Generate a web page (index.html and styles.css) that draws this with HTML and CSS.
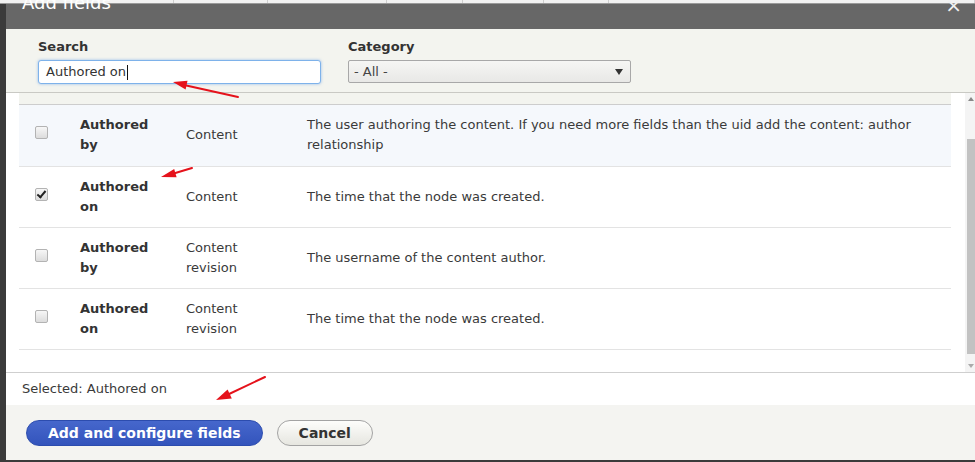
FILE: index.html
```html
<!DOCTYPE html>
<html lang="en">
<head>
  <meta charset="UTF-8" />
  <meta name="viewport" content="width=device-width, initial-scale=1.0" />
  <title>Add fields</title>
  <link rel="stylesheet" href="styles.css">
</head>
<body>

  <!-- the page behind the modal, only its header edge shows -->
  <div class="page-strip">
    <span></span><span></span><span></span><span></span>
    <span></span><span></span><span></span><span></span>
  </div>

  <div class="dialog">
    <div class="dialog-title">
      <span class="dialog-title-text">Add fields</span>
      <span class="dialog-close">&times;</span>
    </div>

    <div class="filters">
      <div class="filter filter-search">
        <label>Search</label>
        <div class="text-input">Authored on<span class="caret"></span></div>
      </div>
      <div class="filter filter-category">
        <label>Category</label>
        <div class="select">- All -<span class="select-arrow"></span></div>
      </div>
    </div>

    <div class="list-area">
      <div class="list-scroll">
        <div class="list-head"></div>
        <table class="fields">
          <colgroup>
            <col class="col-check">
            <col class="col-name">
            <col class="col-category">
            <col>
          </colgroup>
          <tbody>
            <tr class="is-hover">
              <td><input type="checkbox" class="check"></td>
              <td class="name">Authored by</td>
              <td>Content</td>
              <td>The user authoring the content. If you need more fields than the uid add the content: author relationship</td>
            </tr>
            <tr>
              <td><input type="checkbox" class="check" checked></td>
              <td class="name">Authored on</td>
              <td>Content</td>
              <td>The time that the node was created.</td>
            </tr>
            <tr>
              <td><input type="checkbox" class="check"></td>
              <td class="name">Authored by</td>
              <td>Content revision</td>
              <td>The username of the content author.</td>
            </tr>
            <tr>
              <td><input type="checkbox" class="check"></td>
              <td class="name">Authored on</td>
              <td>Content revision</td>
              <td>The time that the node was created.</td>
            </tr>
          </tbody>
        </table>
      </div>
      <div class="scrollbar">
        <span class="scroll-up"></span>
        <span class="scroll-thumb"></span>
        <span class="scroll-down"></span>
      </div>
    </div>

    <div class="selected">Selected: Authored on</div>

    <div class="button-pane">
      <button class="button button-primary">Add and configure fields</button>
      <button class="button">Cancel</button>
    </div>
  </div>

  <!-- red pointer arrows drawn on top -->
  <svg class="marks" width="975" height="462" viewBox="0 0 975 462">
    <g stroke="#e5121b" stroke-width="2" fill="#e5121b" stroke-linecap="round">
      <line x1="238" y1="97" x2="184" y2="85" />
      <polygon stroke="none" points="173,82 187.5,80.8 185.6,89.4" />
      <line x1="192" y1="168" x2="172" y2="174" />
      <polygon stroke="none" points="161,177 176.6,177.2 174.2,169" />
      <line x1="265" y1="377" x2="227" y2="395" />
      <polygon stroke="none" points="216,400 231.8,398.4 227.6,389.6" />
    </g>
  </svg>

</body>
</html>
```

FILE: styles.css
```css
* {
  box-sizing: border-box;
}

body {
  margin: 0;
  height: 462px;
  overflow: hidden;
  position: relative;
  background: #3b3b3b;
  font-family: "DejaVu Sans", "Noto Sans", sans-serif;
  font-size: 13px;
  color: #333;
}

/* page header behind the overlay */
.page-strip {
  display: grid;
  grid-template-columns: 49px 125px 94px 119px 76px 81px 65px 1fr;
  height: 4px;
  background: #f2f2f2;
  border-bottom: 1px solid #9a9a9a;
}

.page-strip span {
  border-right: 1px solid #cfcfcf;
}

.dialog {
  width: 974px;
  height: 456px;
  margin-left: 6px;
  background: #fff;
  display: flex;
  flex-direction: column;
}

.dialog > * {
  flex-shrink: 0;
}

.dialog-title {
  height: 25px;
  background: #676767;
  color: #fff;
  display: flex;
  justify-content: space-between;
  align-items: flex-start;
  padding: 0 18px 0 16px;
}

.dialog-title-text {
  font-size: 18px;
  line-height: 18px;
  margin-top: -10px;
}

.dialog-close {
  font-size: 20px;
  line-height: 20px;
  margin-top: -9px;
  color: #f0f0f0;
}

/* search / category filters */
.filters {
  display: flex;
  gap: 27px;
  padding: 9px 32px 8px;
  background: #f3f4ef;
  border-bottom: 1px solid #c9c9c4;
}

.filter label {
  display: block;
  font-weight: bold;
  line-height: 18px;
  margin-bottom: 4px;
}

.text-input {
  width: 283px;
  height: 24px;
  padding: 0 7px;
  line-height: 22px;
  background: #fff;
  border: 1px solid #7eb2ea;
  border-radius: 3px;
  box-shadow: 0 0 3px rgba(70, 140, 230, 0.55);
  display: flex;
  align-items: center;
}

.caret {
  width: 1px;
  height: 15px;
  margin-left: 1px;
  background: #111;
}

.select {
  width: 283px;
  height: 23px;
  padding: 0 7px 0 5px;
  line-height: 21px;
  background: linear-gradient(#f6f6f4, #e8e8e6);
  border: 1px solid #a8a8a8;
  border-radius: 2px;
  display: flex;
  justify-content: space-between;
  align-items: center;
  color: #444;
}

.select-arrow {
  border-left: 4px solid transparent;
  border-right: 4px solid transparent;
  border-top: 6px solid #333;
}

/* field list */
.list-area {
  height: 280px;
  display: flex;
  border-bottom: 1px solid #cfcfcf;
}

.list-scroll {
  flex: 1;
  padding: 0 14px 0 13px;
}

.list-head {
  height: 12px;
  background: #f3f4ef;
  border-bottom: 1px solid #cdcdcd;
}

.fields {
  width: 100%;
  border-collapse: collapse;
  table-layout: fixed;
}

.col-check {
  width: 49px;
}

.col-name {
  width: 106px;
}

.col-category {
  width: 121px;
}

.fields td {
  padding: 10px 12px;
  line-height: 20px;
  height: 61px;
  vertical-align: middle;
  border-bottom: 1px solid #e3e3e3;
  color: #3a3a3a;
}

.fields td:first-child {
  padding-left: 16px;
}

.fields td.name {
  font-weight: bold;
  color: #333;
}

.fields tr.is-hover td {
  background: #f5f8fc;
}

.check {
  appearance: none;
  display: block;
  position: relative;
  width: 13px;
  height: 13px;
  margin: -5px 0 0;
  border: 1px solid #b3b3b3;
  border-radius: 2px;
  background: linear-gradient(#f7f7f7, #dcdcdc);
}

.check:checked::after {
  content: "";
  position: absolute;
  left: 3px;
  top: 0;
  width: 3px;
  height: 7px;
  border-right: 2px solid #222;
  border-bottom: 2px solid #222;
  transform: rotate(40deg);
}

.scrollbar {
  width: 15px;
  background: #f4f4f4;
  display: flex;
  flex-direction: column;
  align-items: flex-start;
  padding: 4px 0 4px 2px;
}

.scroll-up,
.scroll-down {
  width: 0;
  margin-left: 1px;
  border-left: 3px solid transparent;
  border-right: 3px solid transparent;
}

.scroll-up {
  border-bottom: 4px solid #888;
}

.scroll-down {
  border-top: 4px solid #aaa;
}

.scroll-thumb {
  flex: 1;
  width: 11px;
  margin: 38px 0 10px;
  background: #c2c2c2;
}

.selected {
  padding: 7px 16px;
  line-height: 18px;
  height: 32px;
  color: #3a3a3a;
}

/* dialog buttons */
.button-pane {
  flex: 1 0 auto;
  background: #f4f4f1;
  padding: 15px 20px 14px;
  display: flex;
  gap: 14px;
  align-items: flex-start;
}

.button {
  font-family: inherit;
  font-size: 14px;
  font-weight: bold;
  line-height: 18px;
  height: 26px;
  padding: 3px 21px;
  border-radius: 20px;
  border: 1px solid #a3a3a3;
  background: linear-gradient(#fdfdfb, #e6e6e0);
  color: #333;
}

.button-primary {
  border-color: #2c4cae;
  background: linear-gradient(#4667cc, #3354bc);
  color: #fff;
}

.marks {
  position: absolute;
  top: 0;
  left: 0;
  pointer-events: none;
}
```
